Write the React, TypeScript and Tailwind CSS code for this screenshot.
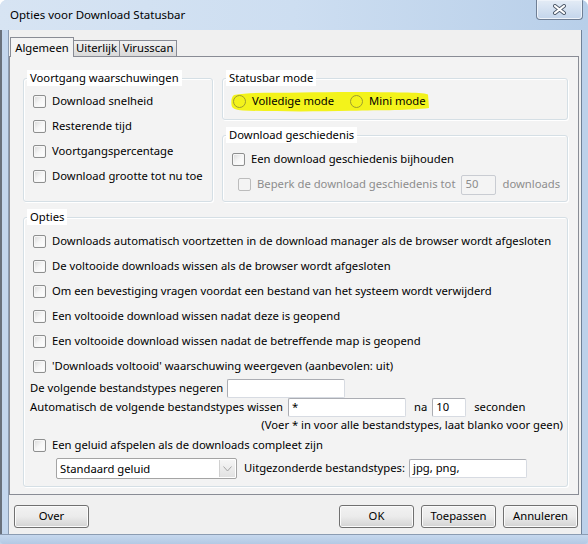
import React from 'react';

type Kids = { children?: React.ReactNode };

function CheckBox({ label, disabled = false }: { label: string; disabled?: boolean }) {
  return (
    <div className={`flex h-[25px] items-center gap-[6px] ${disabled ? 'text-[#8d8d8d]' : ''}`}>
      <span
        className={
          disabled
            ? 'h-[13px] w-[13px] shrink-0 rounded-[2px] border border-[#bcbcbc] bg-[#f4f4f4]'
            : 'h-[13px] w-[13px] shrink-0 rounded-[2px] border border-[#8e8f8f] bg-gradient-to-br from-[#d9d9d9] via-[#f6f6f6] to-white shadow-[inset_0_0_0_1px_#f7f7f7]'
        }
      />
      <span className="whitespace-nowrap">{label}</span>
    </div>
  );
}

function Radio({ label, className = '' }: { label: string; className?: string }) {
  return (
    <span className={`flex items-center gap-[6px] ${className}`}>
      <span className="h-[13px] w-[13px] shrink-0 rounded-full border border-[#9d9d2e]" />
      <span className="whitespace-nowrap">{label}</span>
    </span>
  );
}

function TextBox({ value = '', className = '', disabled = false }: { value?: string; className?: string; disabled?: boolean }) {
  return (
    <div
      className={`flex h-[19px] shrink-0 items-center rounded-[2px] border pl-[3px] ${
        disabled ? 'border-[#c9ccd2] bg-[#f4f4f4] text-[#8d8d8d]' : 'border-[#abadb3] border-b-[#d7dbe2] border-r-[#d7dbe2] bg-white'
      } ${className}`}
    >
      {value}
    </div>
  );
}

function GroupBox({ title, className = '', children }: { title: string; className?: string } & Kids) {
  return (
    <fieldset
      className={`min-w-0 rounded-[3px] border border-[#d5dfe5] shadow-[inset_1px_1px_0_#ffffff,1px_1px_0_#ffffff] ${className}`}
    >
      <legend className="ml-[3px] bg-white px-[3px] leading-[16px]">{title}</legend>
      {children}
    </fieldset>
  );
}

function Button({ children }: Kids) {
  return (
    <button className="flex h-[23px] w-[75px] items-center justify-center rounded-[3px] border border-[#707070] bg-gradient-to-b from-[#f2f2f2] via-[#ebebeb] to-[#d3d3d3] shadow-[inset_0_0_0_1px_#fbfbfb]">
      {children}
    </button>
  );
}

function TitleBar() {
  return (
    <div className="flex h-[30px] bg-gradient-to-r from-[#d7e4f3] via-[#cddef1] to-[#b8cfe9]">
      <div className="flex-1 pl-[10px] pt-[7px] text-[11.5px] leading-[16px]">Opties voor Download Statusbar</div>
      <button className="mr-[5px] flex h-[20px] w-[47px] items-center justify-center rounded-b-[4px] border border-t-0 border-[#6f7f95] bg-gradient-to-b from-[#e4ecf6] to-[#c3d5eb] shadow-[inset_0_0_0_1px_#eef3fa]">
        <svg width="15" height="11" viewBox="0 0 15 11">
          <path d="M3 2 L12 9 M12 2 L3 9" stroke="#4e5a6a" strokeWidth="4" strokeLinecap="round" fill="none" />
          <path d="M3 2 L12 9 M12 2 L3 9" stroke="#ffffff" strokeWidth="2.2" strokeLinecap="round" fill="none" />
        </svg>
      </button>
    </div>
  );
}

function Tabs() {
  return (
    <div className="flex h-[26px] items-end pl-[1px]">
      <div className="relative z-10 -mb-px flex h-[20px] w-[64px] justify-center border border-b-0 border-[#898c95] bg-[#f3f3f3] pt-[2px] leading-[16px]">
        Algemeen
      </div>
      <div className="flex h-[16px] w-[46px] items-center justify-center border border-b-0 border-l-0 border-[#898c95] bg-gradient-to-b from-[#f2f2f2] to-[#d9d9d9]">
        Uiterlijk
      </div>
      <div className="flex h-[16px] w-[57px] items-center justify-center border border-b-0 border-l-0 border-[#898c95] bg-gradient-to-b from-[#f2f2f2] to-[#d9d9d9]">
        Virusscan
      </div>
    </div>
  );
}

function Algemeen() {
  return (
    <div className="h-[439px] w-[570px] border border-[#898c95] bg-[#f3f3f3] pl-[13px] pr-[10px] pt-[13px]">
      <div className="flex gap-[9px]">
        <GroupBox title="Voortgang waarschuwingen" className="w-[190px]">
          <div className="pl-[9px] pt-[3px]">
            <CheckBox label="Download snelheid" />
            <CheckBox label="Resterende tijd" />
            <CheckBox label="Voortgangspercentage" />
            <CheckBox label="Download grootte tot nu toe" />
          </div>
        </GroupBox>

        <div className="flex w-[346px] flex-col">
          <GroupBox title="Statusbar mode">
            <div className="relative mb-[5px] mt-[3px] flex h-[25px] items-center pl-[10px]">
              <svg className="absolute left-[8px] top-[2px]" width="199" height="21" viewBox="0 0 199 21">
                <path
                  d="M3 4 C20 1 45 2 70 1.5 C110 0.5 150 1 172 1.5 C185 1.8 193 2 197 3.5 L198 17 C180 19.5 150 19 120 19.8 C80 20.8 40 20.5 12 19.5 C5 19 1 18 0.5 14 C0 10 0.5 6 3 4 Z"
                  fill="#f3f31b"
                />
              </svg>
              <div className="relative flex items-center">
                <Radio label="Volledige mode" />
                <Radio label="Mini mode" className="ml-[16px]" />
              </div>
            </div>
          </GroupBox>

          <GroupBox title="Download geschiedenis" className="mt-[7px]">
            <div className="pb-[4px] pl-[9px] pt-[4px]">
              <CheckBox label="Een download geschiedenis bijhouden" />
              <div className="flex h-[25px] items-center pl-[6px] text-[#8d8d8d]">
                <CheckBox label="Beperk de download geschiedenis tot" disabled />
                <TextBox value="50" disabled className="ml-[6px] h-[20px] w-[35px]" />
                <span className="ml-[6px]">downloads</span>
              </div>
            </div>
          </GroupBox>
        </div>
      </div>

      <GroupBox title="Opties" className="mt-[7px]">
        <div className="pb-[7px] pl-[6px] pr-[4px] pt-[4px]">
          <div className="pl-[3px]">
            <CheckBox label="Downloads automatisch voortzetten in de download manager als de browser wordt afgesloten" />
            <CheckBox label="De voltooide downloads wissen als de browser wordt afgesloten" />
            <CheckBox label="Om een bevestiging vragen voordat een bestand van het systeem wordt verwijderd" />
            <CheckBox label="Een voltooide download wissen nadat deze is geopend" />
            <CheckBox label="Een voltooide download wissen nadat de betreffende map is geopend" />
            <CheckBox label="'Downloads voltooid' waarschuwing weergeven (aanbevolen: uit)" />
          </div>
          <div className="flex h-[19px] items-center">
            <span className="whitespace-nowrap">De volgende bestandstypes negeren</span>
            <TextBox className="ml-[4px] w-[118px]" />
          </div>
          <div className="flex h-[19px] items-center">
            <span className="whitespace-nowrap">Automatisch de volgende bestandstypes wissen</span>
            <TextBox value="*" className="ml-[5px] w-[118px]" />
            <span className="ml-[8px]">na</span>
            <TextBox value="10" className="ml-[5px] w-[34px]" />
            <span className="ml-[8px]">seconden</span>
          </div>
          <div className="flex h-[16px] items-center justify-end">
            (Voer * in voor alle bestandstypes, laat blanko voor geen)
          </div>
          <div className="pl-[3px]">
            <CheckBox label="Een geluid afspelen als de downloads compleet zijn" />
          </div>
          <div className="flex h-[21px] items-center">
            <div className="ml-[26px] flex h-[21px] w-[181px] rounded-[2px] border border-[#a4a4a4] bg-white">
              <span className="flex-1 pl-[3px] leading-[19px]">Standaard geluid</span>
              <span className="m-px flex w-[16px] items-center justify-center border-l border-[#d0d0d0] bg-gradient-to-b from-[#f6f6f6] to-[#e2e2e2]">
                <svg width="9" height="6" viewBox="0 0 9 6">
                  <path d="M0.5 0.5 L4.5 5 L8.5 0.5" stroke="#a6a6a6" fill="none" />
                </svg>
              </span>
            </div>
            <span className="ml-[7px] whitespace-nowrap">Uitgezonderde bestandstypes:</span>
            <TextBox value="jpg, png," className="ml-[4px] w-[118px]" />
          </div>
        </div>
      </GroupBox>
    </div>
  );
}

export default function App() {
  return (
    <div className="flex h-[544px] w-[588px] flex-col overflow-hidden rounded-t-[7px] bg-[#c2d5ec] font-['Noto_Sans',sans-serif] text-[11.25px] text-black">
      <TitleBar />
      <div className="flex flex-1">
        <div className="w-[9px] border-l-[2px] border-r border-l-[#69717c] border-r-[#8b9cb2] bg-[#c3d6ed]" />
        <div className="flex w-[572px] flex-col bg-[#f0f0f0]">
          <Tabs />
          <Algemeen />
          <div className="mt-[10px] flex h-[23px] pl-[5px] pr-[3px]">
            <Button>Over</Button>
            <div className="flex-1" />
            <div className="flex gap-[7px]">
              <Button>OK</Button>
              <Button>Toepassen</Button>
              <Button>Annuleren</Button>
            </div>
          </div>
          <div className="flex-1" />
        </div>
        <div className="w-[7px] border-l border-[#6f8198] bg-[#bcd1ea]" />
      </div>
      <div className="h-[10px] rounded-b-[4px] border-t border-[#8b9cb2] bg-gradient-to-b from-[#c6d8ee] to-[#b3c9e4]" />
    </div>
  );
}
